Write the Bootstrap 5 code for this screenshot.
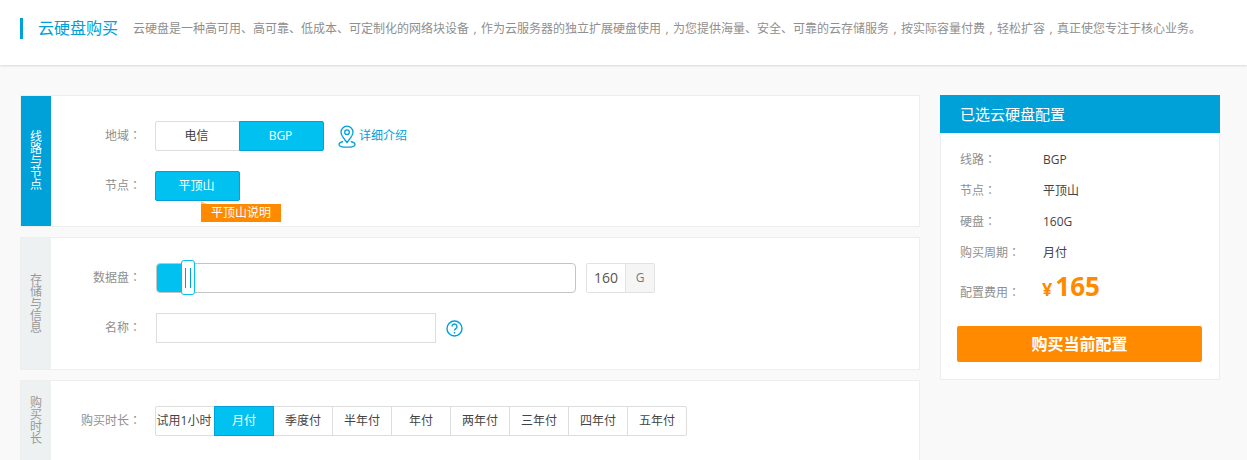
<!doctype html>
<html lang="zh-CN">
<head>
<meta charset="utf-8">
<title>云硬盘购买</title>
<link rel="stylesheet" href="https://cdn.jsdelivr.net/npm/bootstrap@5.3.0/dist/css/bootstrap.min.css">
<style>
html,body{height:460px;overflow:hidden}
body{background:#f9f9f9;font-family:"Open Sans","Noto Sans CJK SC",sans-serif;font-size:12px;color:#444}
.mid-punct{font-family:"Noto Sans CJK TC",sans-serif;line-height:0}
.comma-cell{display:inline-block;width:12px;text-align:center;line-height:0}
.top-head{height:65px;background:#fff;box-shadow:0 1px 2px #d8d8d8;padding:18px 20px 0}
.head-title{border-left:3px solid #00a0d9;height:21px;line-height:21px;padding-left:15px;font-size:16px;color:#00a0d9;margin-right:15px}
.head-desc{color:#8f8f8f;line-height:21px;white-space:nowrap}
.page-wrap{padding:30px 20px 0;gap:20px}
.left-col{width:900px}
.panel-box{background:#fff;border:1px solid #eee;margin-bottom:10px}
.panel-one{height:132px}
.panel-two{height:133px}
.panel-three{height:81px;margin-bottom:0;border-bottom:0}
.side-tab{width:30px;background:#edf1f2;color:#999;flex:none}
.side-words{width:12px;font-size:12px;line-height:12px;word-break:break-all;text-align:center}
.side-on{background:#00a0d9;color:#fff}
.form-rows{padding-top:25px}
.form-line{height:30px;margin-bottom:20px}
.line-label{width:90px;margin-right:14px;text-align:right;color:#8f8f8f;flex:none}
.opt-btn{width:85px;height:30px;padding:0 2px 0 0;border:1px solid #ddd;border-radius:0;background:#fff;color:#444;font-size:12px;line-height:28px}
.opt-btn.picked,.opt-btn.picked:hover{background:#00c1f0;border-color:#00a0d9;color:#fff}
.opt-first{border-radius:2px 0 0 2px}
.opt-last{border-radius:0 2px 2px 0;margin-left:-1px}
.opt-solo{border-radius:2px}
.detail-link{color:#00a0d9;text-decoration:none;margin-left:14px}
.detail-link svg{margin-right:3px}
.tag-holder{position:relative}
.tag-note{position:absolute;left:46px;top:33px;width:80px;height:18px;line-height:18px;background:#ff8a00;color:#fff;text-align:center}
.tag-note::before{content:"";position:absolute;left:0;top:-3px;border-left:6px solid #ffc77f;border-top:3px solid transparent}
.row-two{padding-top:25px}
.slide-track{width:420px;height:30px;margin-left:1px;position:relative;border:1px solid #c4c4c4;border-radius:4px;background:#fff}
.slide-fill{width:25px;height:28px;background:#00c1f0;border-radius:3px 0 0 3px}
.slide-grip{position:absolute;left:24px;top:-4px;width:14px;height:35px;background:#fff;border:1px solid #00c1f0;border-radius:3px;display:flex;justify-content:center;align-items:center;gap:4px}
.slide-grip i{display:block;width:1px;height:20px;background:#00a0d9}
.size-box{margin-left:10px;height:30px;width:69px;border:1px solid #e2e2e2;border-radius:2px;background:#fff}
.size-num{width:38px;line-height:28px;text-align:center;font-size:14px;color:#555}
.size-unit{flex:1;line-height:28px;text-align:center;background:#f5f5f5;border-left:1px solid #e2e2e2;color:#777}
.name-field{width:280px;height:30px;margin-left:1px;border:1px solid #ddd;border-radius:0;padding:0 8px;font-size:12px;background:#fff}
.help-icon{margin-left:10px}
.time-row{padding-top:25px}
.time-btn{width:60px;height:30px;padding:0;margin-left:-1px;border:1px solid #ddd;border-radius:0;background:#fff;color:#444;font-size:12px;line-height:28px;white-space:nowrap}
.time-btn:first-child{margin-left:0;padding-right:2px;border-radius:2px 0 0 2px}
.time-btn:last-child{border-radius:0 2px 2px 0}
.time-btn.picked,.time-btn.picked:hover{background:#00c1f0;border-color:#00a0d9;color:#fff;position:relative;z-index:1}
.right-col{width:280px}
.sum-head{height:38px;line-height:38px;background:#00a0d9;color:#fff;font-size:15px;padding-left:20px}
.sum-body{background:#fff;border:1px solid #eee;border-top:0;height:247px;padding:11px 17px 0 16px}
.sum-line{height:31px;line-height:31px;padding-left:3px}
.sum-key{width:83px;color:#8f8f8f;flex:none}
.sum-price{height:40px;padding-left:3px}
.sum-price .sum-key{padding-top:10px}
.price-val{margin:-4px 0 0 -1px}
.price-yen{font-size:18px;font-weight:700;color:#ff8a00;margin-right:3px}
.price-num{font-size:26px;font-weight:700;color:#ff8a00;line-height:40px}
.buy-btn{width:245px;height:36px;margin-top:18px;padding:0;background:#ff8a00;border:0;border-radius:2px;color:#fff;font-size:16px;font-weight:700}
.buy-btn:hover{background:#ff8a00;color:#fff}
</style>
</head>
<body>
<header class="top-head d-flex">
  <div class="head-title">云硬盘购买</div>
  <div class="head-desc">云硬盘是一种高可用、高可靠、低成本、可定制化的网络块设备<span class="comma-cell">,</span>作为云服务器的独立扩展硬盘使用<span class="comma-cell">,</span>为您提供海量、安全、可靠的云存储服务<span class="comma-cell">,</span>按实际容量付费<span class="comma-cell">,</span>轻松扩容<span class="comma-cell">,</span>真正使您专注于核心业务。</div>
</header>
<main class="page-wrap d-flex align-items-start">
  <div class="left-col">
    <section class="panel-box panel-one d-flex">
      <div class="side-tab side-on d-flex align-items-center justify-content-center"><div class="side-words">线路与节点</div></div>
      <div class="form-rows flex-grow-1">
        <div class="form-line d-flex align-items-center">
          <div class="line-label">地域<span class="mid-punct" lang="zh-TW">：</span></div>
          <button class="btn opt-btn opt-first">电信</button>
          <button class="btn opt-btn opt-last picked">BGP</button>
          <a class="detail-link d-flex align-items-center" href="#">
            <svg width="18" height="23" viewBox="0 0 18 23" fill="none" stroke="#00a0d9" stroke-width="1.3"><path d="M9 17.5C6 13.5 3 10.5 3 7.2a6 6 0 0 1 12 0C15 10.5 12 13.5 9 17.5Z"/><circle cx="9" cy="7.2" r="2.3"/><path d="M5.2 16.5C2.5 17.2 1 18.3 1 19.5c0 1.6 3.6 2.7 8 2.7s8-1.1 8-2.7c0-1.2-1.500-2.300-4.200-3"/></svg>
            详细介绍</a>
        </div>
        <div class="form-line d-flex align-items-center">
          <div class="line-label">节点<span class="mid-punct" lang="zh-TW">：</span></div>
          <div class="tag-holder">
            <button class="btn opt-btn opt-solo picked">平顶山</button>
            <div class="tag-note">平顶山说明</div>
          </div>
        </div>
      </div>
    </section>
    <section class="panel-box panel-two d-flex">
      <div class="side-tab d-flex align-items-center justify-content-center"><div class="side-words">存储与信息</div></div>
      <div class="row-two flex-grow-1">
        <div class="form-line d-flex align-items-center">
          <div class="line-label">数据盘<span class="mid-punct" lang="zh-TW">：</span></div>
          <div class="slide-track"><div class="slide-fill"></div><div class="slide-grip"><i></i><i></i></div></div>
          <div class="size-box d-flex"><div class="size-num">160</div><div class="size-unit">G</div></div>
        </div>
        <div class="form-line d-flex align-items-center">
          <div class="line-label">名称<span class="mid-punct" lang="zh-TW">：</span></div>
          <input class="form-control name-field" type="text" aria-label="名称">
          <svg class="help-icon" width="17" height="17" viewBox="0 0 17 17" fill="none" stroke="#00a0d9" stroke-width="1.400"><circle cx="8.500" cy="8.500" r="7.500"/><path d="M6 6.500a2.500 2.500 0 1 1 3.800 2.100c-.9.6-1.300 1-1.300 2"/><path d="M8.500 12v1.500" stroke-width="1.500"/></svg>
        </div>
      </div>
    </section>
    <section class="panel-box panel-three d-flex">
      <div class="side-tab d-flex align-items-center justify-content-center"><div class="side-words">购买时长</div></div>
      <div class="time-row flex-grow-1">
        <div class="d-flex align-items-center">
          <div class="line-label">购买时长<span class="mid-punct" lang="zh-TW">：</span></div>
          <div class="d-flex">
            <button class="btn time-btn">试用1小时</button>
            <button class="btn time-btn picked">月付</button>
            <button class="btn time-btn">季度付</button>
            <button class="btn time-btn">半年付</button>
            <button class="btn time-btn">年付</button>
            <button class="btn time-btn">两年付</button>
            <button class="btn time-btn">三年付</button>
            <button class="btn time-btn">四年付</button>
            <button class="btn time-btn">五年付</button>
          </div>
        </div>
      </div>
    </section>
  </div>
  <aside class="right-col">
    <div class="sum-head">已选云硬盘配置</div>
    <div class="sum-body">
      <div class="sum-line d-flex"><div class="sum-key">线路<span class="mid-punct" lang="zh-TW">：</span></div><div>BGP</div></div>
      <div class="sum-line d-flex"><div class="sum-key">节点<span class="mid-punct" lang="zh-TW">：</span></div><div>平顶山</div></div>
      <div class="sum-line d-flex"><div class="sum-key">硬盘<span class="mid-punct" lang="zh-TW">：</span></div><div>160G</div></div>
      <div class="sum-line d-flex"><div class="sum-key">购买周期<span class="mid-punct" lang="zh-TW">：</span></div><div>月付</div></div>
      <div class="sum-price d-flex align-items-center"><div class="sum-key">配置费用<span class="mid-punct" lang="zh-TW">：</span></div><div class="price-val"><span class="price-yen">¥</span><span class="price-num">165</span></div></div>
      <button class="btn buy-btn">购买当前配置</button>
    </div>
  </aside>
</main>
</body>
</html>
